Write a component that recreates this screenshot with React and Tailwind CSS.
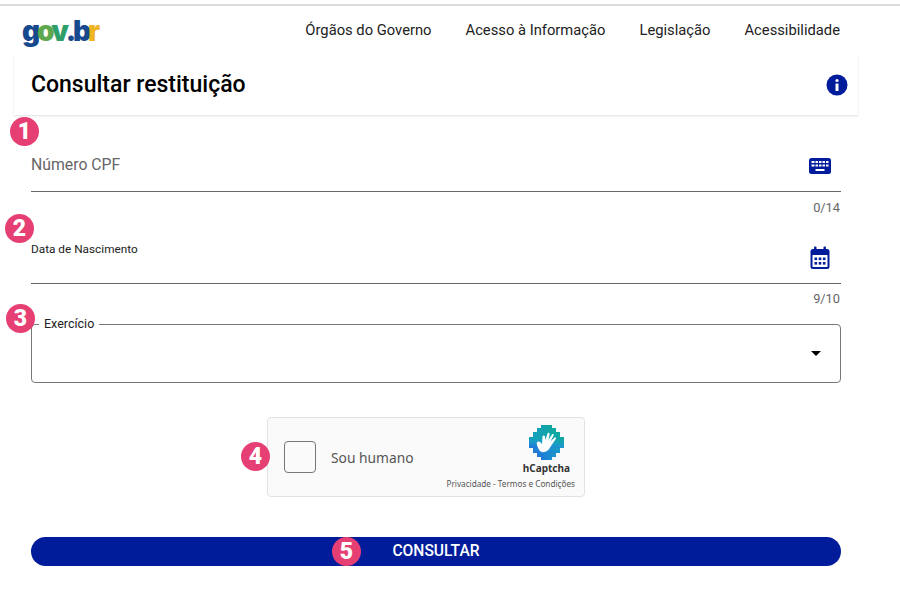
const NAVY = '#001c9b';

const Badge = ({ n, className }) => (
  <span className={`absolute flex h-[29px] w-[29px] items-center justify-center rounded-full bg-[#e63f73] text-[23px] font-black leading-none text-white ${className}`}>
    {n}
  </span>
);

const Logo = () => (
  <div className="ml-[22px] flex text-[28px] font-black leading-none tracking-[-3.2px] [font-family:Inter,sans-serif]">
    <span className="text-[#17498f]">g</span>
    <span className="text-[#5fa84e]">o</span>
    <span className="text-[#2f9f6a]">v</span>
    <span className="text-[#17498f]">.b</span>
    <span className="text-[#eeb422]">r</span>
  </div>
);

const KeyboardIcon = () => (
  <svg width="24" height="18" viewBox="0 0 24 18">
    <rect x="1" y="1" width="22" height="16" rx="2.5" fill={NAVY} />
    <g fill="#fff">
      <rect x="3.5" y="4" width="17" height="2" />
      <rect x="3.5" y="7.5" width="17" height="2" />
      <rect x="7.5" y="12" width="9" height="2" />
    </g>
    <g fill={NAVY}>
      <rect x="6.5" y="4" width="1" height="6" />
      <rect x="10" y="4" width="1" height="6" />
      <rect x="13.5" y="4" width="1" height="6" />
      <rect x="17" y="4" width="1" height="6" />
    </g>
  </svg>
);

const CalendarIcon = () => (
  <svg width="20" height="24" viewBox="0 0 20 24">
    <rect x="0.5" y="3" width="19" height="20" rx="2.5" fill={NAVY} />
    <rect x="4" y="0.5" width="2.5" height="4" rx="1" fill={NAVY} />
    <rect x="13.5" y="0.5" width="2.5" height="4" rx="1" fill={NAVY} />
    <rect x="2.5" y="9" width="15" height="12" rx="0.5" fill="#fff" />
    <g fill={NAVY}>
      <rect x="4.5" y="11.5" width="2.6" height="2.6" />
      <rect x="8.7" y="11.5" width="2.6" height="2.6" />
      <rect x="12.9" y="11.5" width="2.6" height="2.6" />
      <rect x="4.5" y="16" width="2.6" height="2.6" />
      <rect x="8.7" y="16" width="2.6" height="2.6" />
      <rect x="12.9" y="16" width="2.6" height="2.6" />
    </g>
  </svg>
);

const InfoIcon = () => (
  <svg width="22" height="22" viewBox="0 0 22 22">
    <circle cx="11" cy="11" r="10.5" fill={NAVY} />
    <circle cx="11" cy="6.5" r="1.6" fill="#fff" />
    <rect x="9.5" y="9.5" width="3" height="7.5" rx="0.5" fill="#fff" />
  </svg>
);

const HCaptchaLogo = () => (
  <svg width="35" height="35" viewBox="0 0 35 35">
    <defs>
      <linearGradient id="hc" x1="0.7" y1="0" x2="0.2" y2="1">
        <stop offset="0" stopColor="#0fa7a0" />
        <stop offset="0.55" stopColor="#1a9cc9" />
        <stop offset="1" stopColor="#1f78d8" />
      </linearGradient>
    </defs>
    <g fill="url(#hc)">
      <rect x="12" y="0" width="11" height="35" />
      <rect x="8" y="3" width="19" height="29" />
      <rect x="4" y="7" width="27" height="21" />
      <rect x="0" y="12" width="35" height="11" />
    </g>
    <path
      d="M8 20 C7 17 9 15.5 11 17 L13 19 L13.5 11.5 C14 10 16 10.3 16 12 L16.4 15 L18.5 8.5 C19 7.3 20.8 7.8 20.6 9.2 L19.4 15 L23 9.5 C23.8 8.5 25.2 9.3 24.6 10.5 L21.4 16.5 L25.6 12.6 C26.6 11.8 27.6 13 26.8 14 L22 21 C20 25.5 16 28 12.8 27 C10 26 9 23 8 20 Z"
      fill="#fff"
    />
  </svg>
);

export default function App() {
  return (
    <div className="relative h-[593px] w-[900px] overflow-hidden bg-white pt-[4px] [font-family:Roboto,sans-serif]">
      <div className="border-t-2 border-[#dcdcdc]" />

      <header className="flex h-[49px] items-center justify-between pr-[60px]">
        <Logo />
        <nav className="flex gap-[34px] text-[14.75px] text-[#222]">
          <span>Órgãos do Governo</span>
          <span>Acesso à Informação</span>
          <span>Legislação</span>
          <span>Acessibilidade</span>
        </nav>
      </header>

      <div className="ml-[14px] flex h-[60px] w-[844px] items-center justify-between pl-[17px] pr-[10px] shadow-[0_1px_2px_rgba(0,0,0,0.13)]">
        <h1 className="text-[23px] font-medium text-black">Consultar restituição</h1>
        <InfoIcon />
      </div>

      <form className="relative ml-[31px] w-[810px]">
        <Badge n="1" className="left-[-21px] top-[2px]" />
        <Badge n="2" className="left-[-26px] top-[99px]" />
        <Badge n="3" className="left-[-25px] top-[189px]" />

        <div className="flex h-[77px] items-center justify-between border-b border-[#666] pb-[2px] pr-[9px] pt-[28px]">
          <span className="mb-[3px] text-[15.8px] text-[#666]">Número CPF</span>
          <KeyboardIcon />
        </div>
        <p className="h-[30px] pr-[1px] pt-[6px] text-right text-[12.8px] text-[#666]">0/14</p>

        <div className="relative flex h-[62px] items-end justify-end border-b border-[#666] pb-[13px] pr-[11px]">
          <span className="absolute left-0 top-[22px] text-[11.8px] leading-none text-[#222]">Data de Nascimento</span>
          <CalendarIcon />
        </div>
        <p className="h-[34px] pr-[1px] pt-[5px] text-right text-[12.8px] text-[#666]">9/10</p>

        <fieldset className="flex h-[65px] items-center justify-end rounded-[4px] border border-[#777] pr-[19px]">
          <legend className="ml-[7px] px-[5px] text-[12.5px] leading-none text-[#222]">Exercício</legend>
          <span className="mb-[6px] border-x-[5.5px] border-t-[5.5px] border-x-transparent border-t-black" />
        </fieldset>

        <div className="relative ml-[236px] mt-[34px] flex h-[80px] w-[318px] items-center rounded-[4px] border border-[#e2e2e2] bg-[#fafafa] pl-[16px]">
          <Badge n="4" className="left-[-27px] top-[24px]" />
          <span className="h-[32px] w-[32px] rounded-[4px] border border-[#777] bg-[#fafafa]" />
          <span className="ml-[15px] mt-[2px] text-[13.8px] text-[#555] [font-family:'Noto_Sans',sans-serif]">Sou humano</span>
          <div className="absolute right-[9px] top-[7px] flex flex-col items-end">
            <div className="mr-[5px] flex flex-col items-center">
              <HCaptchaLogo />
              <span className="mt-[3px] text-[10px] font-bold leading-none text-[#333] [font-family:'Noto_Sans',sans-serif]">hCaptcha</span>
            </div>
            <span className="mt-[7px] whitespace-nowrap text-[8.2px] leading-none text-[#555] [font-family:'Noto_Sans',sans-serif]">Privacidade - Termos e Condições</span>
          </div>
        </div>

        <button type="button" className="relative mt-[40px] flex h-[29px] w-full items-center justify-center rounded-full bg-[#001c9b] text-[15.6px] font-medium text-white">
          <Badge n="5" className="left-[301px] top-[0px]" />
          CONSULTAR
        </button>
      </form>
    </div>
  );
}
